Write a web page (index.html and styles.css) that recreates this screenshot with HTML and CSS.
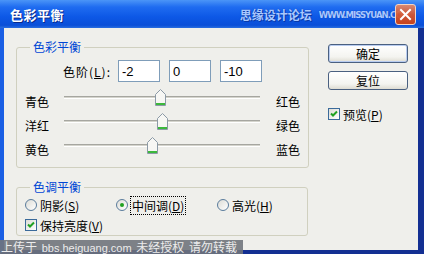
FILE: index.html
```html
<!DOCTYPE html>
<html lang="zh-CN">
    <head>
        <meta charset="UTF-8" />
        <title>色彩平衡</title>
        <link rel="stylesheet" href="styles.css">
    </head>
    <body>
        <div class="window">
            <div class="titlebar">
                <span class="title">色彩平衡</span>
                <span class="brand">思缘设计论坛</span>
                <span class="brand-url">WWW.MISSYUAN.COM</span>
                <span class="close">
                    <svg width="21" height="21" viewBox="0 0 21 21">
                        <path d="M6 6 L15 15 M15 6 L6 15" stroke="#fff" stroke-width="2" stroke-linecap="square" />
                    </svg>
                </span>
            </div>
            <div class="frame">
                <div class="main">
                    <fieldset class="group balance">
                        <legend>色彩平衡</legend>
                        <div class="levels">
                            <label class="levels-label">色阶(<u>L</u>):</label>
                            <input class="num" value="-2">
                            <input class="num" value="0">
                            <input class="num" value="-10">
                        </div>
                        <div class="slider-row">
                            <span class="end-left">青色</span>
                            <div class="track">
                                <span class="thumb" style="left: 91px">
                                    <svg width="11" height="17" viewBox="0 0 11 17"><path d="M0.5 16.5 V5.5 L5.5 0.5 L10.5 5.5 V16.5 Z" fill="#f7f7f4" stroke="#8c9aa6" /><path d="M1 14.5 H10 M1 15.5 H10" stroke="#3cb83c" /></svg>
                                </span>
                            </div>
                            <span class="end-right">红色</span>
                        </div>
                        <div class="slider-row">
                            <span class="end-left">洋红</span>
                            <div class="track">
                                <span class="thumb" style="left: 93px">
                                    <svg width="11" height="17" viewBox="0 0 11 17"><path d="M0.5 16.5 V5.5 L5.5 0.5 L10.5 5.5 V16.5 Z" fill="#f7f7f4" stroke="#8c9aa6" /><path d="M1 14.5 H10 M1 15.5 H10" stroke="#3cb83c" /></svg>
                                </span>
                            </div>
                            <span class="end-right">绿色</span>
                        </div>
                        <div class="slider-row">
                            <span class="end-left">黄色</span>
                            <div class="track">
                                <span class="thumb" style="left: 83px">
                                    <svg width="11" height="17" viewBox="0 0 11 17"><path d="M0.5 16.5 V5.5 L5.5 0.5 L10.5 5.5 V16.5 Z" fill="#f7f7f4" stroke="#8c9aa6" /><path d="M1 14.5 H10 M1 15.5 H10" stroke="#3cb83c" /></svg>
                                </span>
                            </div>
                            <span class="end-right">蓝色</span>
                        </div>
                    </fieldset>
                    <fieldset class="group tone">
                        <legend>色调平衡</legend>
                        <div class="tone-row">
                            <span class="option opt-shadow"><span class="radio"></span>阴影(<u>S</u>)</span>
                            <span class="option opt-mid"><span class="radio checked"></span><span class="focus">中间调(<u>D</u>)</span></span>
                            <span class="option"><span class="radio"></span>高光(<u>H</u>)</span>
                        </div>
                        <div class="tone-row">
                            <span class="option">
                                <span class="box">
                                    <svg width="10" height="10" viewBox="0 0 10 10"><path d="M2 4.5 L4 6.5 L8 2.5" fill="none" stroke="#21a121" stroke-width="2" /></svg>
                                </span>保持亮度(<u>V</u>)
                            </span>
                        </div>
                    </fieldset>
                </div>
                <div class="side">
                    <button class="btn btn-default">确定</button>
                    <button class="btn">复位</button>
                    <span class="option preview">
                        <span class="box">
                            <svg width="10" height="10" viewBox="0 0 10 10"><path d="M2 4.5 L4 6.5 L8 2.5" fill="none" stroke="#21a121" stroke-width="2" /></svg>
                        </span>预览(<u>P</u>)
                    </span>
                </div>
            </div>
            <div class="upload-note">上传于 <span class="site">bbs.heiguang.com</span> 未经授权 请勿转载</div>
        </div>
    </body>
</html>
```

FILE: styles.css
```css
body {
    margin: 0;
}
.window {
    position: relative;
    width: 424px;
    height: 254px;
    display: flex;
    flex-direction: column;
    background: #0a3fc4;
    font: 12px "Noto Sans CJK SC", sans-serif;
    color: #000;
    overflow: hidden;
}
.titlebar {
    flex: none;
    height: 28px;
    display: flex;
    align-items: center;
    padding: 0 8px 0 10px;
    background: linear-gradient(#4b95f7, #1f6cf0 25%, #0d58e6 60%, #0a4fd8 90%, #2a6ee0);
}
.title {
    color: #fff;
    font-size: 13px;
    font-weight: bold;
    text-shadow: 1px 1px 0 #0a2a8a;
    letter-spacing: 0.5px;
}
.brand {
    margin-left: auto;
    color: #a9c8ff;
    font-size: 12px;
    font-weight: bold;
    text-shadow: 0 0 1px #0b3aa8, 1px 1px 0 #0b3aa8;
}
.brand-url {
    margin-left: 7px;
    color: #a9c8ff;
    font: bold 9.5px "DejaVu Sans Condensed", "DejaVu Sans", sans-serif;
    letter-spacing: -1px;
    text-shadow: 0 0 1px #0b3aa8;
}
.close {
    margin-left: -14px;
    width: 21px;
    height: 21px;
    box-sizing: border-box;
    border: 1px solid #f3d3c3;
    border-radius: 3px;
    background: linear-gradient(rgba(232, 138, 102, 0.92), rgba(217, 86, 44, 0.92) 50%, #c8431c);
    display: flex;
    align-items: center;
    justify-content: center;
}
.close svg {
    display: block;
    margin: -1px;
}
.frame {
    flex: 1;
    display: flex;
    padding: 11px 0 0 12px;
    background: #efefeb;
    border-left: 4px solid #1a5fe4;
    border-right: 6px solid #132f92;
    border-bottom: 4px solid #132f92;
}
.main {
    flex: none;
    width: 292px;
}
.group {
    margin: 0;
    padding: 0 8px 6px;
    border: 1px solid #d0d0bf;
    border-radius: 3px;
}
.group legend {
    margin-left: 5px;
    padding: 0 3px;
    line-height: 16px;
    color: #0046d5;
}
.levels {
    display: flex;
    align-items: center;
    height: 22px;
    margin-top: 5px;
}
.levels-label {
    flex: none;
    width: 50px;
    margin: 0 5px 0 38px;
    letter-spacing: 1px;
    white-space: nowrap;
}
.num {
    flex: none;
    width: 42px;
    height: 22px;
    box-sizing: border-box;
    margin: 0 9px 0 0;
    padding: 0 3px;
    border: 1px solid #7f9db9;
    background: #fff;
    font: 13px "Liberation Sans", sans-serif;
    color: #000;
    outline: none;
}
.slider-row {
    display: flex;
    align-items: center;
    height: 24px;
    white-space: nowrap;
}
.levels + .slider-row {
    margin-top: 7px;
}
.end-left {
    flex: none;
    width: 39px;
}
.track {
    flex: none;
    position: relative;
    width: 196px;
    height: 24px;
}
.track::before {
    content: "";
    position: absolute;
    left: 0;
    right: 0;
    top: 7px;
    height: 1px;
    border-top: 1px solid #a6a6a0;
    border-bottom: 1px solid #fff;
    background: #d4d4cc;
}
.thumb {
    position: absolute;
    top: 0;
}
.thumb svg {
    display: block;
}
.end-right {
    flex: none;
    margin-left: 16px;
}
.tone {
    margin-top: 11px;
    padding-bottom: 0;
}
.tone-row {
    display: flex;
    align-items: center;
    height: 20px;
    white-space: nowrap;
}
.option {
    display: flex;
    align-items: center;
    white-space: nowrap;
}
.opt-shadow {
    width: 91px;
}
.opt-mid {
    width: 101px;
}
.radio {
    flex: none;
    width: 12px;
    height: 12px;
    box-sizing: border-box;
    margin-right: 3px;
    border: 1px solid #5a7c9c;
    border-radius: 50%;
    background: linear-gradient(135deg, #dcdcd6, #fff);
    display: flex;
    align-items: center;
    justify-content: center;
}
.radio.checked::after {
    content: "";
    width: 4px;
    height: 4px;
    border-radius: 50%;
    background: #21a121;
}
.focus {
    outline: 1px dotted #000;
    padding: 0 1px;
}
.box {
    flex: none;
    width: 12px;
    height: 12px;
    box-sizing: border-box;
    margin-right: 3px;
    border: 1px solid #3a6a9a;
    background: linear-gradient(135deg, #dcdcd6, #fff);
    display: flex;
    align-items: center;
    justify-content: center;
}
.box svg {
    display: block;
}
.side {
    margin-left: 20px;
    padding-top: 5px;
    display: flex;
    flex-direction: column;
    align-items: flex-start;
}
.btn {
    width: 80px;
    height: 19px;
    padding: 0;
    margin-bottom: 8px;
    border: 1px solid #4a6080;
    border-radius: 3px;
    background: linear-gradient(#fff, #f4f4f0 70%, #dedcd2);
    font: 12px "Noto Sans CJK SC", sans-serif;
    line-height: 17px;
    color: #000;
}
.btn-default {
    box-shadow: inset 0 0 0 1px #b8ccf0;
}
.preview {
    margin-top: 8px;
    height: 16px;
}
.upload-note {
    position: absolute;
    left: 0;
    bottom: 0;
    width: 243px;
    height: 14px;
    padding-left: 1px;
    box-sizing: border-box;
    background: rgba(112, 116, 124, 0.9);
    color: #ececec;
    font: 12px "Noto Sans CJK SC", sans-serif;
    line-height: 14px;
    word-spacing: 2px;
    white-space: nowrap;
}
.upload-note .site {
    font: 11px "Liberation Sans", sans-serif;
}
```
